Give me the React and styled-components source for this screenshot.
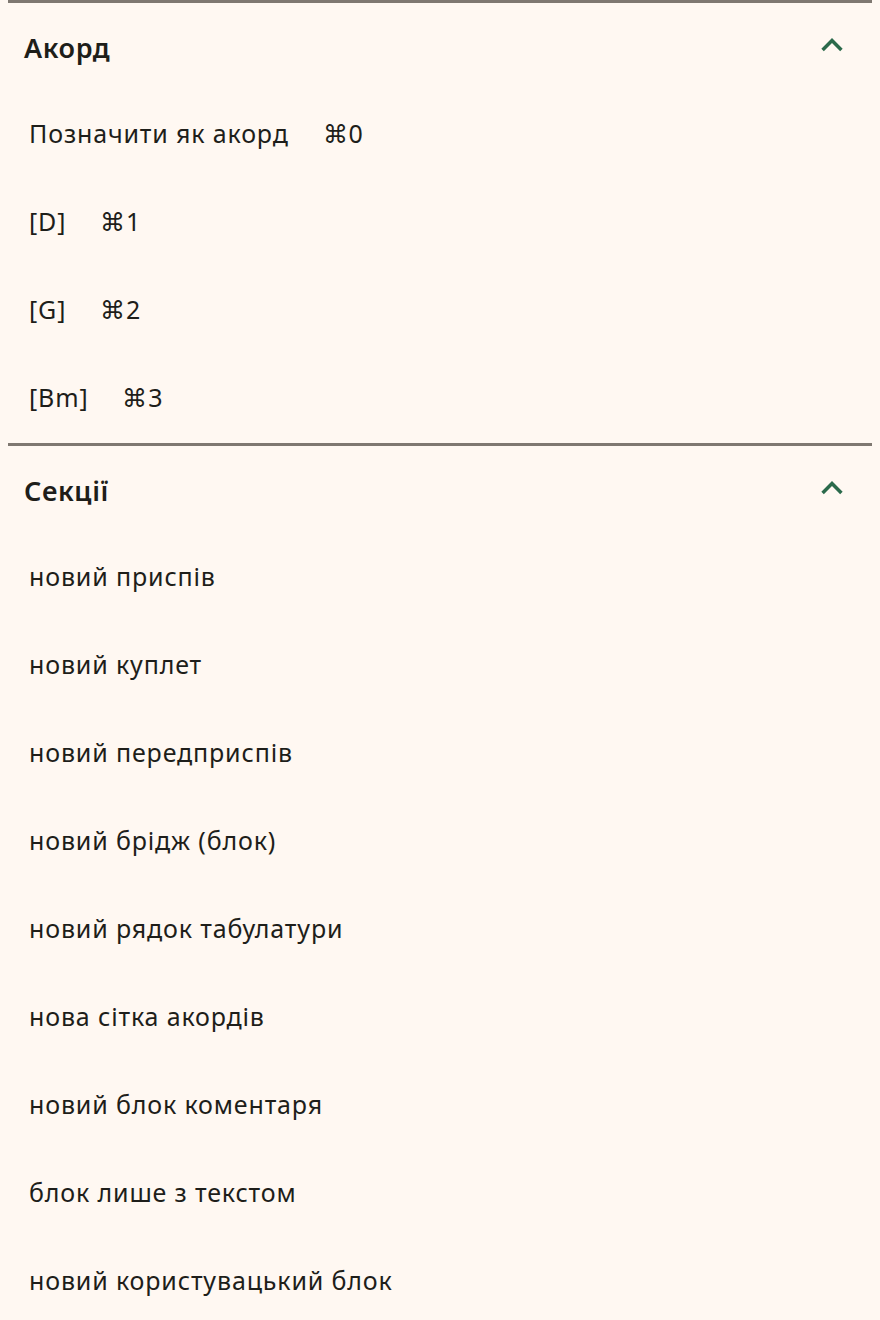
import React from "react";
import styled, { createGlobalStyle } from "styled-components";

const GlobalStyle = createGlobalStyle`
  html, body {
    background: #fff8f2;
  }
  body {
    margin: 0 8px;
    font-family: "Noto Sans", "Open Sans", sans-serif;
    color: #1e1e1a;
  }
`;

const Section = styled.section`
  border-top: 3px solid #7f7871;
`;

const Header = styled.div`
  display: flex;
  align-items: center;
  justify-content: space-between;
  height: 88px;
  padding: 0 26px 0 16px;
`;

const Title = styled.h2`
  margin: 0;
  font-size: 27px;
  font-weight: 600;
  letter-spacing: 0.6px;
`;

const Chevron = styled.svg`
  width: 28px;
  height: 28px;
  margin-bottom: 6px;
  color: #2b6a4b;
`;

const List = styled.ul`
  list-style: none;
  margin: 0;
  padding: 0;
`;

const Item = styled.li`
  display: flex;
  align-items: center;
  box-sizing: border-box;
  height: 88px;
  padding: 0 0 4px 21px;
  font-size: 25px;
  letter-spacing: 0.85px;
`;

const Shortcut = styled.span`
  margin-left: 34px;
`;

const sections = [
  {
    title: "Акорд",
    items: [
      ["Позначити як акорд", "⌘0"],
      ["[D]", "⌘1"],
      ["[G]", "⌘2"],
      ["[Bm]", "⌘3"],
    ],
  },
  {
    title: "Секції",
    items: [
      ["новий приспів"],
      ["новий куплет"],
      ["новий передприспів"],
      ["новий брідж (блок)"],
      ["новий рядок табулатури"],
      ["нова сітка акордів"],
      ["новий блок коментаря"],
      ["блок лише з текстом"],
      ["новий користувацький блок"],
    ],
  },
];

export default function App() {
  return (
    <>
      <GlobalStyle />
      {sections.map((s) => (
        <Section key={s.title}>
          <Header>
            <Title>{s.title}</Title>
            <Chevron viewBox="0 0 24 24" fill="none" stroke="currentColor" strokeWidth="3" strokeLinecap="square">
              <path d="M5 16 L12 9 L19 16" />
            </Chevron>
          </Header>
          <List>
            {s.items.map(([label, key]) => (
              <Item key={label}>
                {label}
                {key && <Shortcut>{key}</Shortcut>}
              </Item>
            ))}
          </List>
        </Section>
      ))}
    </>
  );
}
